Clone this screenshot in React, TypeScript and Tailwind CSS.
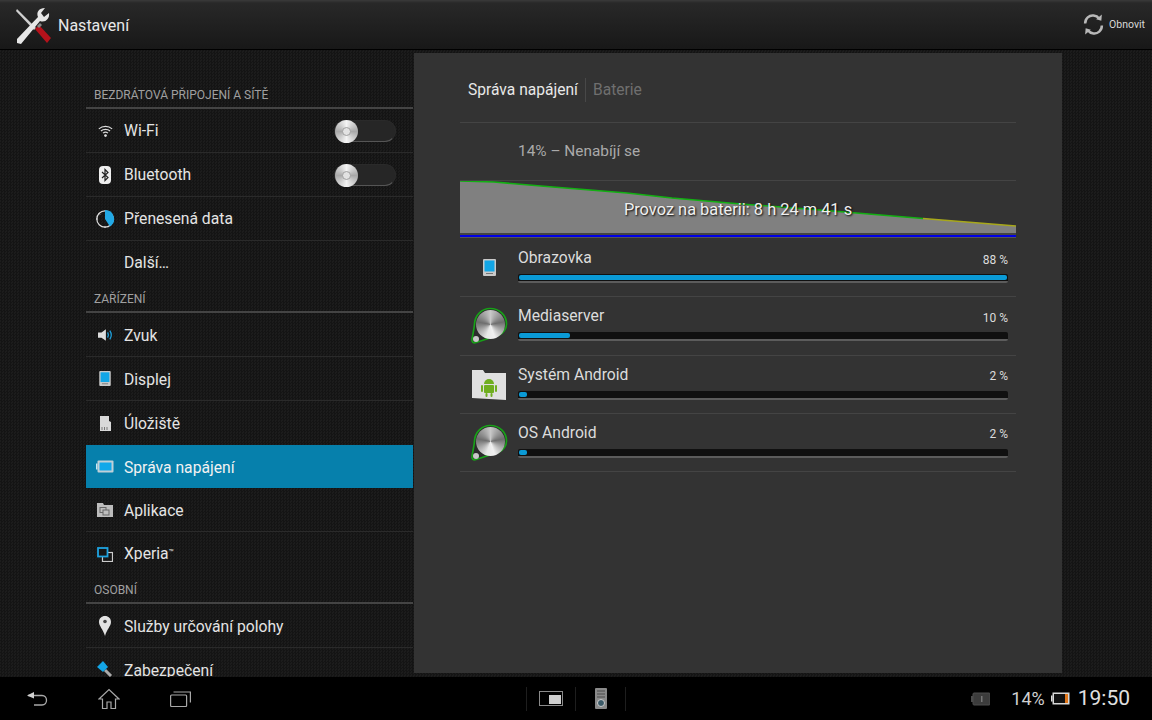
import React from "react";

const Wrench = () => (
  <svg width="38" height="38" viewBox="0 0 38 38" className="shrink-0">
    <path d="M3 3 L2 5 L20 24 L22 22 Z" fill="#d0d0d0" />
    <path d="M21 23 L25 19 L37 32 L33 37 Z" fill="#b5121b" />
    <path d="M23 20 L26 17 L28 19 L25 22 Z" fill="#888" />
    <path d="M3 33 L24 11 C22 6 25 2 31 2 L27 7 L30 11 L35 7 C36 13 31 17 26 15 L7 38 L3 37 Z" fill="#e6e6e6" />
  </svg>
);
const Wifi = () => (
  <svg width="15" height="14" viewBox="0 0 18 16" fill="none" stroke="#ddd">
    <path d="M1 5.500 C5.500 1.500 12.500 1.500 17 5.500" strokeWidth="1.400" />
    <path d="M3.500 8 C6.500 5.500 11.500 5.500 14.500 8" strokeWidth="1.400" />
    <path d="M6 10.500 C7.800 9 10.200 9 12 10.500" strokeWidth="1.400" />
    <circle cx="9" cy="13.500" r="1.600" fill="#ddd" stroke="none" />
  </svg>
);
const Bt = () => (
  <svg width="12" height="18" viewBox="0 0 12 18">
    <rect width="12" height="18" rx="4" fill="#eee" />
    <path d="M3 6 L9 11.500 L6 14.500 V3.500 L9 6.500 L3 12" fill="none" stroke="#222" strokeWidth="1.200" />
  </svg>
);
const DataIc = () => (
  <svg width="20" height="20" viewBox="0 0 20 20">
    <circle cx="10" cy="10" r="8.200" fill="none" stroke="#ddd" strokeWidth="1.200" />
    <path d="M10 1 A9 9 0 0 1 15 17.500 L10 10 Z" fill="#22a9e6" />
    <path d="M1 10 h2 M10 17 v2 M3.500 4 l1.500 1.500" stroke="#ddd" strokeWidth="1" />
  </svg>
);
const Speaker = () => (
  <svg width="16" height="14" viewBox="0 0 18 16">
    <path d="M1 5 H5 L10 1.500 V14.500 L5 11 H1 Z" fill="#ddd" />
    <path d="M12 5 C13.200 7 13.200 9 12 11" fill="none" stroke="#1ea3e0" strokeWidth="1.400" />
    <path d="M14.500 3 C16.500 6 16.500 10 14.500 13" fill="none" stroke="#1ea3e0" strokeWidth="1.400" />
  </svg>
);
const Tablet = ({ small }: { small?: boolean }) => (
  <svg width={small ? 12 : 13} height={small ? 15 : 17} viewBox="0 0 13 17">
    <rect width="13" height="17" rx="1" fill="#c9c9c9" />
    <rect x="1.500" y="1.500" width="10" height="11" fill="#12a6e6" />
    <rect x="3" y="14" width="7" height="1" fill="#777" />
  </svg>
);
const Sd = () => (
  <svg width="11" height="15" viewBox="0 0 11 15">
    <path d="M0 0 H9 V5 L11 6 V15 H0 Z" fill="#d8d8d8" />
    <path d="M2 11 v3 M4.500 11 v3 M7 11 v3" stroke="#777" />
  </svg>
);
const Batt = () => (
  <svg width="18" height="13" viewBox="0 0 18 13">
    <rect x="0" y="3.500" width="1.500" height="6" fill="#c8e8f5" />
    <rect x="1.500" y="0.500" width="16" height="12" rx="1" fill="#c0d0d8" />
    <rect x="3.500" y="2.500" width="12" height="8" fill="#10a8ea" />
  </svg>
);
const Apps = () => (
  <svg width="16" height="15" viewBox="0 0 16 15">
    <path d="M0 1 H6 L7 3 H16 V15 H0 Z" fill="#bdbdbd" />
    <rect x="3" y="5.500" width="6" height="5" fill="none" stroke="#666" />
    <rect x="6" y="8" width="6" height="5" fill="#bdbdbd" stroke="#666" />
  </svg>
);
const Xp = () => (
  <svg width="16" height="15" viewBox="0 0 16 15" fill="none">
    <rect x="5.500" y="5.500" width="10" height="9" stroke="#ccc" strokeWidth="1.200" />
    <rect x="1" y="1" width="9.500" height="8.500" stroke="#1ea3e0" strokeWidth="1.800" fill="#161616" />
  </svg>
);
const Pin = () => (
  <svg width="12" height="20" viewBox="0 0 12 20">
    <path d="M6 0 C9.500 0 12 2.500 12 6 C12 10 8 13 6 20 C4 13 0 10 0 6 C0 2.500 2.500 0 6 0 Z" fill="#e2e2e2" />
    <circle cx="6" cy="5.500" r="1.800" fill="#444" />
  </svg>
);
const Key = () => (
  <svg width="16" height="18" viewBox="0 0 16 18">
    <path d="M8 9 L14 15" stroke="#aaa" strokeWidth="3" />
    <path d="M0 6 L6 0 L11 6 L6 11 Z" fill="#13a5e6" />
  </svg>
);
const Toggle = () => (
  <div className="relative h-[22px] w-[62px] rounded-full border border-[#2a2a2a] border-b-[#555] bg-[#262626]">
    <div className="absolute left-0 top-[-1px] flex h-[23px] w-[23px] items-center justify-center rounded-full bg-[conic-gradient(#f4f4f4,#a8a8a8,#f4f4f4,#a8a8a8,#f4f4f4)]">
      <div className="h-[9px] w-[9px] rounded-full border border-[#a0a0a0] bg-[#e2e2e2]" />
    </div>
  </div>
);

type RowT = { icon?: React.ReactNode; label: React.ReactNode; toggle?: boolean; active?: boolean; last?: boolean; tight?: boolean; up?: boolean };
const Row = ({ icon, label, toggle, active, last, tight, up }: RowT) => (
  <div
    className={`flex shrink-0 items-center ${active ? "h-[43px] bg-[#0680ac] text-[#f2f2f2]" : "h-[44px] text-[#e4e4e4]"} ${
      last || active ? "" : "border-b border-[#2a2a2a]"
    }`}
  >
    <div className="flex w-[38px] shrink-0 items-center justify-center">{icon}</div>
    <span className={`block text-[15.7px] leading-none ${tight ? "pb-[1px]" : up ? "pt-[1px]" : "pt-[3px]"}`}>{label}</span>
    {toggle && (
      <div className="ml-auto mr-[17px]">
        <Toggle />
      </div>
    )}
  </div>
);
const Head = ({ t, first }: { t: string; first?: boolean }) => (
  <div
    className={`flex shrink-0 items-end border-b-2 border-[#444] pb-[6px] pl-2 text-[12px] leading-none text-[#a0a0a0] ${
      first ? "h-[59px]" : "h-[28px]"
    }`}
  >
    {t}
  </div>
);

const Media = () => (
  <div className="relative h-[38px] w-[38px]">
    <svg width="38" height="38" viewBox="0 0 38 38" className="block">
      <path d="M20 1.500 C30 1.500 36.500 8.500 36.500 17 C36.500 22 33 26.500 29 28 L6 35.500 C3 36.500 1.500 34.500 2 32 C3 27 4 22 4.500 17 C5 8 12 1.500 20 1.500 Z" fill="#2b2b2b" stroke="#18a018" strokeWidth="1.700" />
      <circle cx="6" cy="32" r="3" fill="#c8c8c8" />
    </svg>
    <div className="absolute left-[6px] top-[3px] h-[29px] w-[29px] rounded-full bg-[conic-gradient(#c8c8c8,#6e6e6e_22%,#f0f0f0_45%,#e8e8e8_55%,#6e6e6e_78%,#c8c8c8)]" />
  </div>
);
const Folder = () => (
  <svg width="36" height="31" viewBox="0 0 36 31">
    <path d="M1 1 H12 L14 4 H35 V31 L1 29 Z" fill="#e0e0e0" />
    <g fill="#6fae1f">
      <path d="M13 15 A5 5 0 0 1 23 15 Z" />
      <rect x="13" y="16" width="10" height="8" rx="1" />
      <rect x="10" y="16" width="2" height="7" rx="1" />
      <rect x="24" y="16" width="2" height="7" rx="1" />
      <rect x="14.500" y="24" width="2" height="4" rx="1" />
      <rect x="19.500" y="24" width="2" height="4" rx="1" />
    </g>
  </svg>
);
const Use = ({ icon, name, pct, w }: { icon: React.ReactNode; name: string; pct: string; w: number }) => (
  <div className="flex h-[58.3px] shrink-0 border-b border-[#444]">
    <div className="flex w-[58px] shrink-0 items-center justify-center">{icon}</div>
    <div className="flex flex-1 flex-col pr-2 pt-[9px]">
      <div className="flex items-center justify-between leading-none">
        <span className="text-[15.700px] leading-[20px] text-[#dcdcdc]">{name}</span>
        <span className="pt-[3px] text-[12px] text-[#dcdcdc]">{pct}</span>
      </div>
      <div className="mt-[6px] h-[9px] rounded-[2px] border-b-2 border-[#5c5c5c] bg-[#101010] pl-px pr-px pt-px">
        <div className="h-[5px] rounded-[2px] bg-[#0a9ad6]" style={{ width: `${w}%` }} />
      </div>
    </div>
  </div>
);
const Chart = () => (
  <div className="relative h-[59px] shrink-0 border-t border-[#444]">
    <svg width="556" height="58" viewBox="0 0 556 58" className="block">
      <path d="M0 0 L34 1 L93 6 L167 12 L212 17 L275 22.500 L360 29 L463 37.500 L519 42 L556 45 V52 H0 Z" fill="#808080" />
      <path d="M0 0 L34 1 L93 6 L167 12 L212 17 L275 22.500 L360 29 L463 37.500" fill="none" stroke="#12b012" strokeWidth="1.600" />
      <path d="M463 37.500 L519 42 L556 45" fill="none" stroke="#a8a81a" strokeWidth="1.600" />
      <rect x="0" y="52" width="556" height="2" fill="#444" />
      <rect x="0" y="54" width="556" height="2" fill="#0000e6" />
      <rect x="0" y="56" width="556" height="1" fill="#555" />
    </svg>
    <div className="absolute inset-x-0 top-[20px] text-center text-[16.400px] leading-[18px] text-[#f0f0f0] [text-shadow:1px_1px_2px_#000]">
      Provoz na baterii: 8 h 24 m 41 s
    </div>
  </div>
);

export default function App() {
  return (
    <div className="flex h-[720px] w-[1152px] flex-col overflow-hidden bg-black font-['Roboto',sans-serif]">
      <header className="flex h-[50px] shrink-0 items-center border-b border-black bg-[linear-gradient(#3a3a3a_0px,#282828_3px,#181818_100%)] pl-[14px] pr-[7px]">
        <Wrench />
        <span className="ml-[6px] pt-[2px] text-[16px] text-[#e8e8e8]">Nastavení</span>
        <div className="ml-auto flex items-center gap-[5px]">
          <svg width="21" height="23" viewBox="0 0 20 22" fill="none" stroke="#b8b8b8" strokeWidth="2.400">
            <path d="M2 10 C2 5 6 2 10 2.500 C12 2.800 14 3.500 15 5" />
            <path d="M18 12 C18 17 14 20 10 19.500 C8 19.200 6 18.500 5 17" />
            <path d="M12.500 6 L17.500 7.500 L18 1.500 Z" fill="#b8b8b8" stroke="none" />
            <path d="M7.500 16 L2.500 14.500 L2 20.500 Z" fill="#b8b8b8" stroke="none" />
          </svg>
          <span className="text-[10.500px] text-[#d8d8d8]">Obnovit</span>
        </div>
      </header>

      <main className="flex h-[627px] shrink-0 overflow-hidden bg-[#181818] bg-[repeating-conic-gradient(#141414_0_25%,#1c1c1c_0_50%)] bg-[length:3px_3px]">
        <aside className="ml-[86px] flex h-full w-[327px] shrink-0 flex-col overflow-hidden">
          <Head t="BEZDRÁTOVÁ PŘIPOJENÍ A SÍTĚ" first />
          <Row icon={<Wifi />} label="Wi-Fi" toggle up />
          <Row icon={<Bt />} label="Bluetooth" toggle up />
          <Row icon={<DataIc />} label="Přenesená data" up />
          <Row label="Další…" last tight />
          <Head t="ZAŘÍZENÍ" />
          <Row icon={<Speaker />} label="Zvuk" />
          <Row icon={<Tablet small />} label="Displej" />
          <Row icon={<Sd />} label="Úložiště" last up />
          <Row icon={<Batt />} label="Správa napájení" active />
          <Row icon={<Apps />} label="Aplikace" />
          <Row
            icon={<Xp />}
            label={
              <>
                Xperia<sup className="text-[8px]">™</sup>
              </>
            }
            last
            tight
          />
          <Head t="OSOBNÍ" />
          <Row icon={<Pin />} label="Služby určování polohy" />
          <Row icon={<Key />} label="Zabezpečení" />
        </aside>

        <section className="ml-px mb-[4px] mt-[3px] flex w-[648px] shrink-0 flex-col bg-[#333333] px-[46px]">
          <div className="flex h-[70px] shrink-0 items-start border-b border-[#444] pl-2 pt-[25px] text-[15.600px]">
            <span className="leading-[24px] text-[#e8e8e8]">Správa napájení</span>
            <span className="ml-[7px] h-[24px] border-l border-[#484848] pl-[7px] leading-[24px] text-[#6f6f6f]">Baterie</span>
          </div>
          <div className="flex h-[57px] shrink-0 items-center pl-[58px] text-[15.400px] text-[#aaaaaa]">14% – Nenabíjí se</div>
          <Chart />
          <Use icon={<Tablet />} name="Obrazovka" pct="88 %" w={100} />
          <Use icon={<Media />} name="Mediaserver" pct="10 %" w={10.400} />
          <Use icon={<Folder />} name="Systém Android" pct="2 %" w={1.600} />
          <Use icon={<Media />} name="OS Android" pct="2 %" w={1.600} />
        </section>
      </main>

      <footer className="flex h-[43px] shrink-0 items-center bg-black">
        <div className="flex w-[526px] shrink-0 items-center pl-[26px]">
          <svg width="22" height="16" viewBox="0 0 22 16" fill="none" stroke="#a8a8a8" strokeWidth="1.300">
            <path d="M2 4.500 H16 C22 4.500 22 14 16 14 H8" />
            <path d="M8 1 L1 4.500 L8 7.500 Z" fill="#d0d0d0" stroke="none" />
          </svg>
          <svg width="22" height="22" viewBox="0 0 22 22" fill="none" stroke="#a8a8a8" strokeWidth="1.200" className="ml-[50px]">
            <path d="M1 11 L11 1.500 L21 11 H17.500 V20.500 H13 V14 H9 V20.500 H4.500 V11 Z" />
          </svg>
          <svg width="21" height="16" viewBox="0 0 21 16" fill="none" stroke="#a8a8a8" strokeWidth="1.200" className="ml-[50px]">
            <rect x="0.600" y="4" width="16" height="11.500" rx="1" />
            <path d="M3.500 1 H20.400 V11.500" />
          </svg>
        </div>
        <div className="flex h-[24px] w-[50px] shrink-0 items-center justify-center border-x border-[#1e1e1e]">
          <div className="relative h-[15px] w-[24px] border border-[#8a8a8a]">
            <div className="absolute bottom-[1px] right-[1px] h-[9px] w-[12px] bg-[#cfcfcf]" />
          </div>
        </div>
        <div className="flex h-[24px] w-[50px] shrink-0 items-center justify-center border-r border-[#1e1e1e]">
          <svg width="12" height="21" viewBox="0 0 12 21">
            <rect width="12" height="21" rx="1" fill="#8a8a8a" />
            <path d="M2 3 h8 M2 6 h8 M2 9 h8" stroke="#4a4a4a" />
            <circle cx="6" cy="15" r="3.500" fill="#3b5a68" stroke="#ccc" />
          </svg>
        </div>
        <div className="ml-auto flex items-center pr-[22px]">
          <svg width="19" height="14" viewBox="0 0 19 14">
            <rect x="0" y="4" width="2" height="6" fill="#4a4a4a" />
            <rect x="2" y="1" width="17" height="12" rx="1" fill="#3c3c3c" stroke="#4c4c4c" />
            <rect x="10" y="4" width="1.500" height="6" fill="#777" />
          </svg>
          <span className="ml-[21px] text-[18px] leading-none text-[#d0d0d0]">14%</span>
          <svg width="19" height="13" viewBox="0 0 19 13" className="ml-[6px]">
            <rect x="0" y="3.500" width="1.500" height="6" fill="#ddd" />
            <rect x="1.500" y="0.500" width="17" height="12" fill="#d8d8d8" />
            <rect x="3" y="2" width="14" height="9" fill="#111" />
            <rect x="14" y="2" width="3" height="9" fill="#e0761a" />
          </svg>
          <span className="ml-[8px] text-[21px] leading-none text-[#e0e0e0]">19:50</span>
        </div>
      </footer>
    </div>
  );
}
